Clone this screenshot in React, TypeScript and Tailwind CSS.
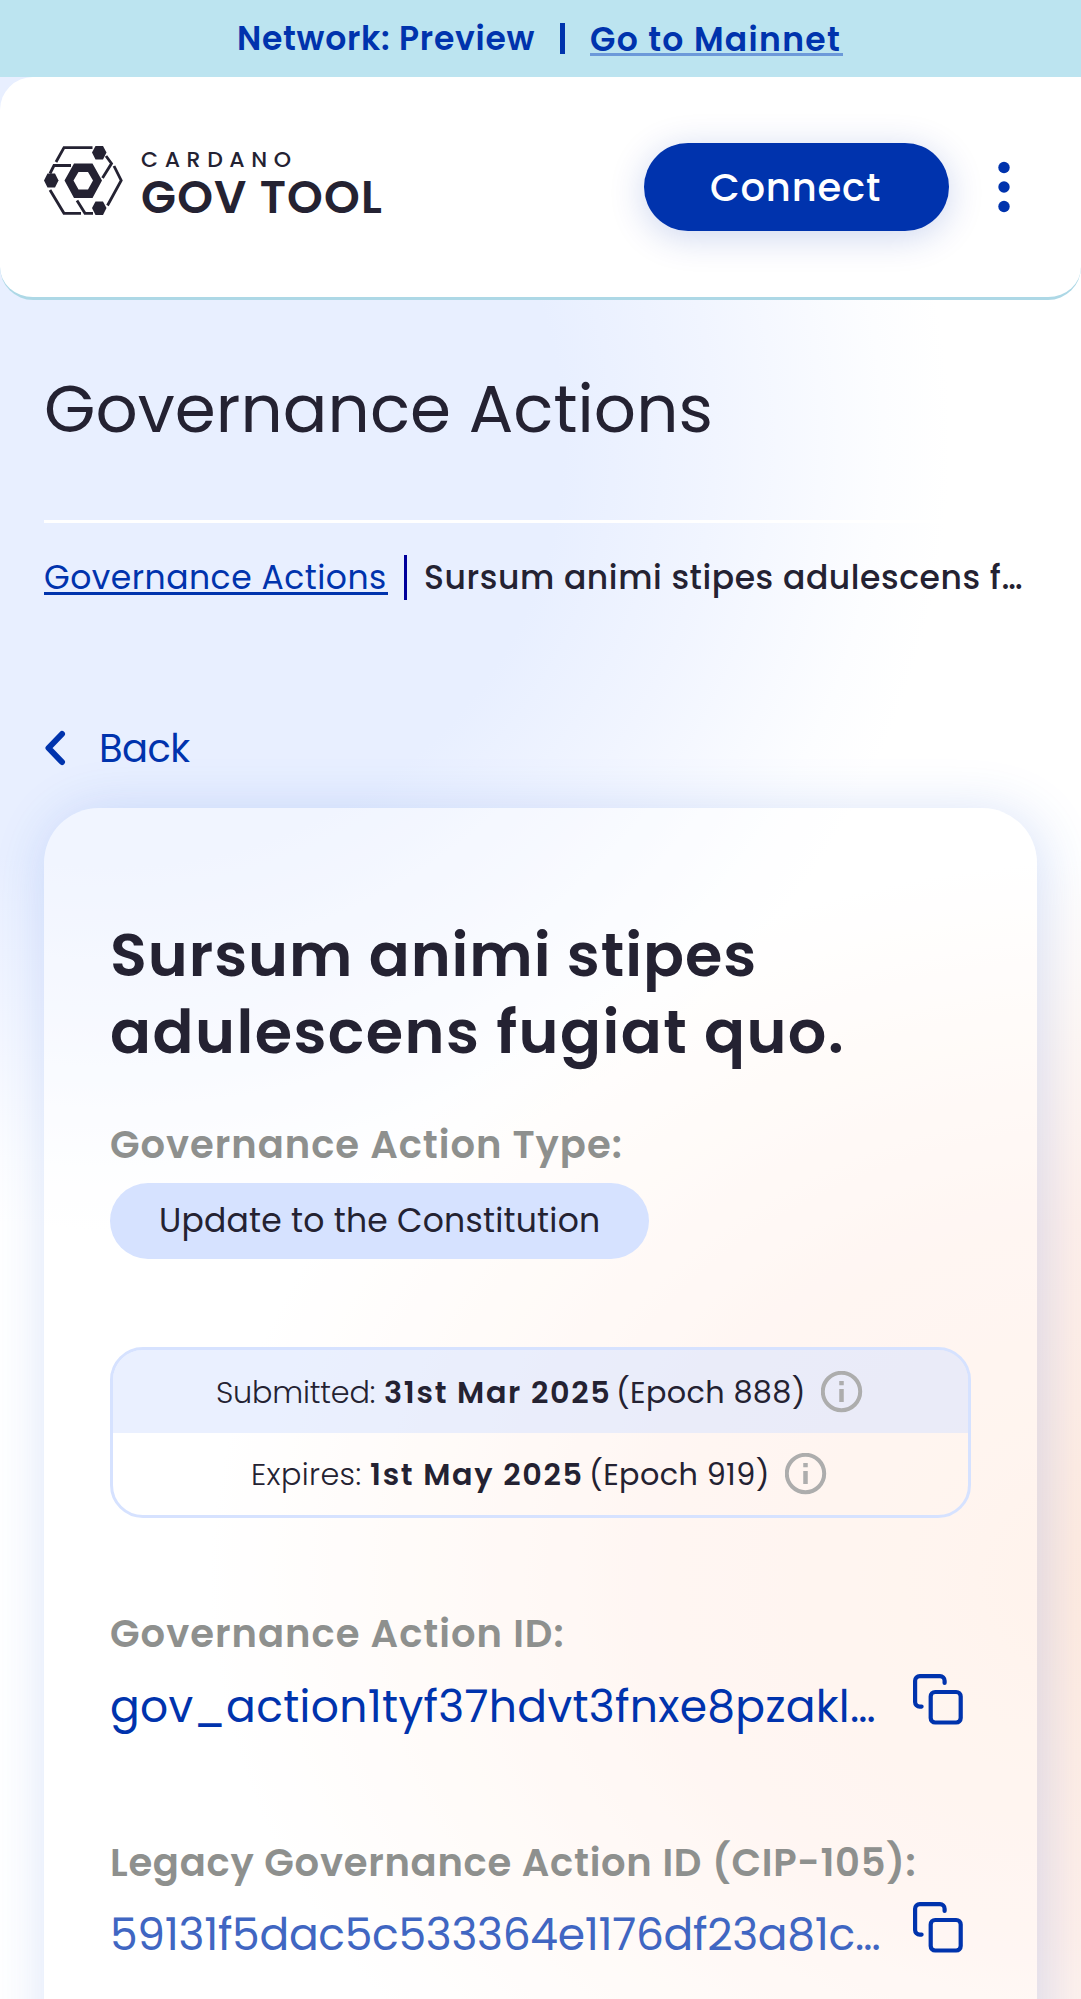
import React from "react";

const INK = "text-[#242232]";
const BLUE = "text-[#0033ad]";

function Logo() {
  return (
    <svg width="79" height="69" viewBox="0 0 79 69" fill="none" stroke="#242232" strokeWidth="2.8">
      <path d="M12 16 20 1.6H48.500" />
      <path d="M62 10 67.500 17.500 58.500 32" />
      <path d="M70 20 77.200 34.500 63.500 59.500" />
      <path d="M6 27.500 10 19.500H27" />
      <path d="M6 44 20 67.300H37" />
      <path d="M33 54.500 41 67.300H49" />
      <path
        fill="#242232"
        stroke="none"
        fillRule="evenodd"
        d="M30 17.500H48.500L58 34.500 48.500 52H30L20.500 34.500ZM34.500 26L29.500 34.500 34.500 43.500H44L49 34.500 44 26Z"
      />
      <g fill="#242232" stroke="none">
        <path d="M51.500 0H59L62.500 6.500 59 13.500H51.500L48 6.500Z" />
        <path d="M3.500 27.500H11L14.500 34.500 11 41.500H3.500L0 34.500Z" />
        <path d="M51.500 55.500H59L62.500 62 59 69H51.500L48 62Z" />
      </g>
    </svg>
  );
}

function InfoIcon() {
  return (
    <svg width="42" height="42" viewBox="0 0 42 42" className="shrink-0">
      <circle cx="20.500" cy="20.500" r="18.700" fill="none" stroke="#adadad" strokeWidth="4" />
      <path d="M20.500 18V31M20.500 10V14.300" stroke="#adadad" strokeWidth="4.500" />
    </svg>
  );
}

function CopyIcon() {
  return (
    <svg width="52" height="52" viewBox="0 0 52 52" fill="none" stroke="#0033ad" strokeWidth="4.200" strokeLinecap="round" strokeLinejoin="round" className="shrink-0">
      <rect x="17.700" y="18" width="30" height="30.500" rx="4.500" />
      <path d="M8.600 32.600H6.700A4.600 4.600 0 0 1 2.100 28V6.700A4.600 4.600 0 0 1 6.700 2.100H27A4.600 4.600 0 0 1 31.600 6.700V9" />
    </svg>
  );
}

function Label({ className, children }: { className: string; children: React.ReactNode }) {
  return <div className={`h-10 pt-px leading-10 text-[38.5px] font-semibold whitespace-nowrap text-[#8e908e] ${className}`}>{children}</div>;
}

export default function App() {
  return (
    <div className={`h-[1999px] w-[1081px] overflow-hidden bg-white font-['Poppins','Inter',sans-serif] ${INK} bg-[radial-gradient(ellipse_920px_720px_at_1130px_1580px,#ffebdf_0%,#ffeee5_25%,#fff0ea_50%,#fff8f4_76%,transparent_100%),radial-gradient(ellipse_840px_790px_at_110px_440px,#e8efff_0%,#e8efff_54%,#f1f5ff_72%,#fcfdff_92%,transparent_100%)]`}>
      <div className={`flex h-[77px] items-center bg-[#bce4f0] pl-[237px] text-[33px] font-semibold whitespace-nowrap ${BLUE}`}>
        <span className="w-[323px] tracking-[0.73px]">Network: Preview</span>
        <span className="h-[31px] w-[5px] bg-[#0033ad]" />
        <span className="ml-[25px] h-[34px] w-[253px] border-b-3 border-[#6c99d9] leading-[35px] tracking-[1.32px]">Go to Mainnet</span>
      </div>

      <header className="flex h-[223px] items-center rounded-[33px] border-b-3 border-[#add8e6] bg-white pl-11">
        <div className="mb-[14px] flex items-center">
          <Logo />
          <div className="ml-[18px] mt-[5px] flex w-[250px] flex-col whitespace-nowrap">
            <span className="h-[30px] text-[22px] leading-[30px] font-medium tracking-[6.63px]">CARDANO</span>
            <span className="h-[45px] text-[45.5px] leading-[45px] font-semibold tracking-[1.2px]">GOV TOOL</span>
          </div>
        </div>
        <button className="ml-[253px] h-[88px] w-[305px] rounded-full bg-[#0033ad] pt-0.5 pr-0.5 text-[38.5px] font-medium tracking-[0.81px] text-white shadow-[0_6px_36px_rgba(0,51,173,0.2)]">
          Connect
        </button>
        <svg width="12" height="52" viewBox="0 0 12 52" fill="#0033ad" className="ml-[49px]">
          <circle cx="6" cy="6.500" r="5.700" />
          <circle cx="6" cy="26" r="5.700" />
          <circle cx="6" cy="45.500" r="5.700" />
        </svg>
      </header>

      <main className="px-11 pt-[69px]">
        <h1 className="h-20 text-[66px] leading-[80px] tracking-[0.08px]">Governance Actions</h1>
        <hr className="mt-[71px] h-[3px] border-0 bg-white" />

        <nav className="mt-8 flex h-[45px] items-center text-[33px] whitespace-nowrap">
          <a className={`h-[34px] w-[344px] shrink-0 border-b-3 border-[#0033ad] leading-[34px] tracking-[0.5px] ${BLUE}`}>Governance Actions</a>
          <span className="ml-4 h-[45px] w-[3px] shrink-0 bg-[#00009b]" />
          <span className="ml-[17px] font-medium tracking-[0.57px]">Sursum animi stipes adulescens f…</span>
        </nav>

        <a className={`mt-32 flex h-10 items-center ${BLUE}`}>
          <svg width="22" height="36" viewBox="0 0 22 36" fill="none" stroke="#0033ad" strokeWidth="6" strokeLinecap="round" strokeLinejoin="round">
            <path d="M18 4 4.500 18 18 32" />
          </svg>
          <span className="ml-[33px] pt-0.5 text-[38.5px] tracking-[-0.6px]">Back</span>
        </a>

        <section className="mt-10 h-[1400px] w-[993px] rounded-[55px] bg-white/40 px-[66px] pt-[108px] shadow-[5px_5px_55px_rgba(47,98,220,0.2)]">
          <h2 className="text-[60.5px] leading-[77px] font-semibold whitespace-nowrap">
            <span className="block tracking-[0.95px]">Sursum animi stipes</span>
            <span className="block tracking-[1.45px]">adulescens fugiat quo.</span>
          </h2>

          <Label className="mt-[54px] tracking-[0.96px]">Governance Action Type:</Label>
          <div className="mt-[19px] flex h-[76px] w-[539px] items-center rounded-full bg-[#d6e2ff] pl-[49px] text-[33px] tracking-[0.23px] whitespace-nowrap">
            Update to the Constitution
          </div>

          <div className="mt-[88px] h-[171px] w-[861px] overflow-hidden rounded-[33px] border-3 border-[#d6e2ff] text-[30.25px] whitespace-nowrap">
            <div className="flex h-[83px] items-center bg-[#d6e2ff]/50 pl-[103px]">
              <span className="w-[168px] pt-0.5 font-light tracking-[-0.2px]">Submitted:</span>
              <span className="w-[232px] pt-0.5 font-semibold tracking-[1.7px]">31st Mar 2025</span>
              <span className="w-[205px] pt-0.5 tracking-[0.36px]">(Epoch 888)</span>
              <InfoIcon />
            </div>
            <div className="flex h-[82px] items-center pl-[138px]">
              <span className="w-[119px] pt-0.5 font-light tracking-[0.39px]">Expires:</span>
              <span className="w-[219px] pt-0.5 font-semibold tracking-[1.7px]">1st May 2025</span>
              <span className="w-[196px] pt-0.5 tracking-[0.4px]">(Epoch 919)</span>
              <InfoIcon />
            </div>
          </div>

          <Label className="mt-[95px] tracking-[1px]">Governance Action ID:</Label>
          <div className="mt-[21px] flex h-[52px] items-center">
            <span className={`w-[803px] shrink-0 pt-3.5 text-[44px] tracking-[0.32px] whitespace-nowrap ${BLUE}`}>gov_action1tyf37hdvt3fnxe8pzakl…</span>
            <CopyIcon />
          </div>

          <Label className="mt-[116px] tracking-[0.72px]">Legacy Governance Action ID (CIP-105):</Label>
          <div className="mt-5 flex h-[52px] items-center">
            <span className="w-[803px] shrink-0 pt-3.5 text-[44px] tracking-[-0.3px] whitespace-nowrap text-[#4066c2]">59131f5dac5c533364e1176df23a81c…</span>
            <CopyIcon />
          </div>
        </section>
      </main>
    </div>
  );
}
